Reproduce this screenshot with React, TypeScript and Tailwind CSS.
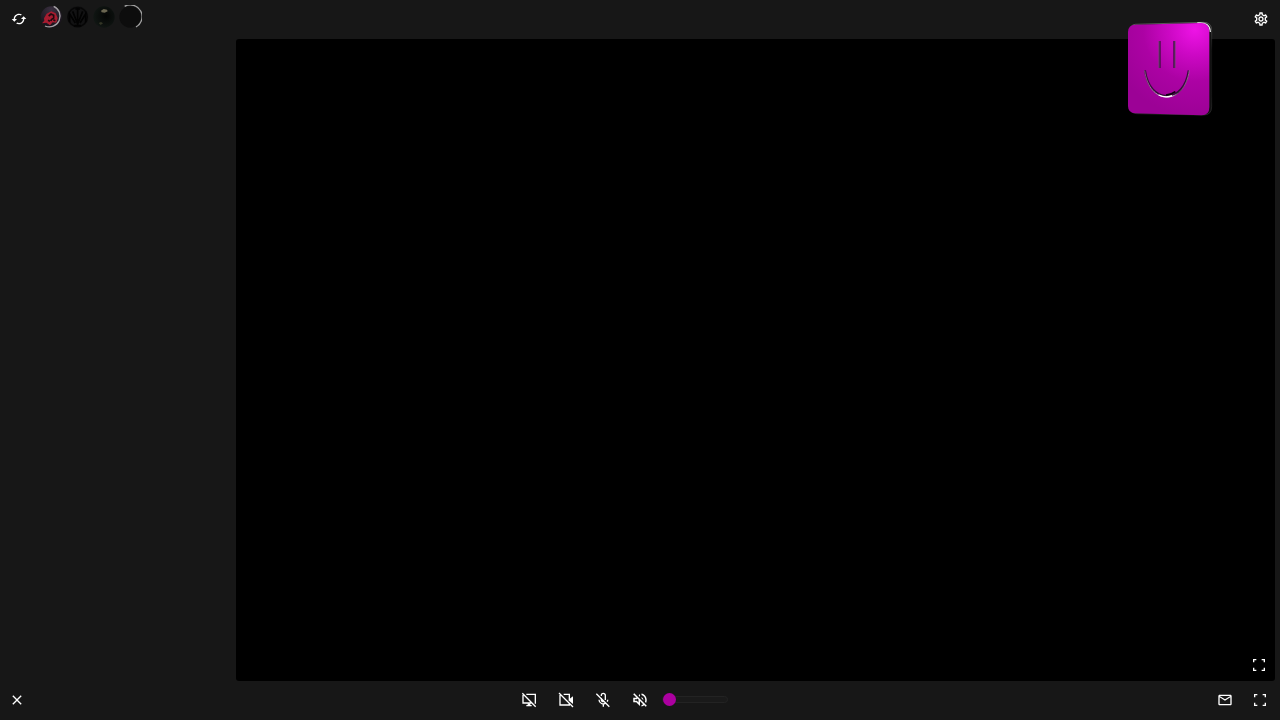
import { useState } from "react";
import type { ReactNode } from "react";
import { MdCached, MdClose, MdMailOutline, MdOutlineSettings, MdOutlineVolumeOff } from "react-icons/md";

function IconButton({ label, children }: { label: string; children: ReactNode }) {
  return (
    <button
      type="button"
      aria-label={label}
      className="flex h-6 w-6 shrink-0 items-center justify-center rounded text-white hover:bg-[#2a2a2a]"
    >
      {children}
    </button>
  );
}

function FullscreenIcon() {
  return (
    <svg viewBox="0 0 24 24" className="h-4 w-4" fill="currentColor">
      <path d="M3 3h5v2H5v3H3zM16 3h5v5h-2V5h-3zM3 16h2v3h3v2H3zM19 16h2v5h-5v-2h3z" />
    </svg>
  );
}

function ScreenOffIcon() {
  return (
    <svg viewBox="0 0 24 24" className="h-4 w-4" fill="none" stroke="currentColor" strokeWidth="2">
      <path d="M8 3.5h13.5v13h-1M3 4.5v12h12.5M2 2l20 20" />
      <path d="M8 19.5h8v2H8zM10 17h4v3h-4z" fill="currentColor" stroke="none" />
    </svg>
  );
}

function VideoOffIcon() {
  return (
    <svg viewBox="0 0 24 24" className="h-4 w-4" fill="none" stroke="currentColor" strokeWidth="2">
      <path d="M8.5 3.5H17V13M3 4.5v15h14v-2M1.5 1.5l21 21" />
      <path d="M17 10.5l5.5-4v11.5L17 13.5z" fill="currentColor" stroke="none" />
    </svg>
  );
}

function MicOffIcon() {
  return (
    <svg viewBox="0 0 24 24" className="h-4 w-4" fill="none" stroke="currentColor" strokeWidth="2">
      <path d="M9.5 6V5a3 3 0 0 1 6 0v7M9.5 9v2.5a3 3 0 0 0 3.5 3M6 11.5a6.5 6.5 0 0 0 10.5 5M19 11.5a6 6 0 0 1-.7 3M12.5 18v4M2 2.5l19.5 19.5" />
    </svg>
  );
}

function Avatar({ label, children }: { label: string; children: ReactNode }) {
  return (
    <button type="button" aria-label={label} className="h-6 w-6">
      <svg viewBox="0 0 72 72" className="h-6 w-6" fill="none">
        {children}
      </svg>
    </button>
  );
}

function Avatars() {
  return (
    <div className="flex gap-0.5">
      <Avatar label="Room 1">
        <defs>
          <radialGradient id="dusk" cx="0.5" cy="0.15" r="0.8">
            <stop offset="0" stopColor="#3a3040" />
            <stop offset="1" stopColor="#17121a" />
          </radialGradient>
        </defs>
        <circle cx="34" cy="36" r="32" fill="url(#dusk)" />
        <path d="M12 40l8-14 14-7 13 6 6 14-4 14-11-1-8 9-11-8-13 2 7-8z" fill="#a81c30" />
        <path d="M26 33l7-6 8 4v8l-7 5-1 4M24 46l6 3M40 44l6 3" stroke="#200a10" strokeWidth="5" />
        <path d="M41 4a32 32 0 1 1-26 59" stroke="#a5a1a5" strokeWidth="4" />
      </Avatar>
      <Avatar label="Room 2">
        <circle cx="35" cy="36" r="32" fill="#121213" />
        <circle cx="35" cy="36" r="29" stroke="#060606" strokeWidth="4" />
        <path
          d="M11 52V27l17 27M35 9v54M28 12h14M20 19l15 38 15-38M42 54l17-27v25M25 62h20"
          stroke="#020202"
          strokeWidth="5"
        />
      </Avatar>
      <Avatar label="Room 3">
        <defs>
          <radialGradient id="moss" cx="0.6" cy="0.45" r="0.6">
            <stop offset="0" stopColor="#040504" />
            <stop offset="1" stopColor="#101613" />
          </radialGradient>
        </defs>
        <circle cx="36" cy="36" r="32" fill="url(#moss)" />
        <path d="M27 17l8-5 10 2 2 5-9 4-9-1z" fill="#6a6550" />
        <path d="M20 54l7-3 6 4-7 5z" fill="#343626" />
      </Avatar>
      <Avatar label="Room 4">
        <circle cx="36" cy="36" r="32" fill="#0d0d0d" />
        <path d="M20 4a34 34 0 0 1 34 62" stroke="#a3a3a3" strokeWidth="4" />
      </Avatar>
    </div>
  );
}

function SmileyBlock() {
  return (
    <svg
      viewBox="48 60 264 291"
      className="pointer-events-none absolute top-[21px] right-[66px] h-[97px] w-[88px]"
      fill="none"
      role="img"
      aria-label="Smiley"
    >
      <defs>
        <radialGradient id="face" gradientUnits="userSpaceOnUse" cx="255" cy="85" r="260">
          <stop offset="0" stopColor="#ee14e6" />
          <stop offset="0.3" stopColor="#cc08c4" />
          <stop offset="0.6" stopColor="#ac02a4" />
          <stop offset="1" stopColor="#9c0296" />
        </radialGradient>
        <linearGradient id="rim" x1="0" y1="0" x2="0" y2="1">
          <stop offset="0" stopColor="#f4f4f4" />
          <stop offset="0.12" stopColor="#777777" />
          <stop offset="0.3" stopColor="#222222" />
          <stop offset="0.8" stopColor="#2d2d2d" />
          <stop offset="1" stopColor="#6a6a6a" />
        </linearGradient>
        <linearGradient id="mouth" x1="0" y1="0" x2="1" y2="0">
          <stop offset="0" stopColor="#8b5d85" />
          <stop offset="0.4" stopColor="#dddddd" />
          <stop offset="0.6" stopColor="#ffffff" />
          <stop offset="0.75" stopColor="#555555" />
          <stop offset="1" stopColor="#a978a1" />
        </linearGradient>
      </defs>
      {/* extruded side and its lit edge */}
      <path
        d="M76 70L280 64q25 0 25 25V317q0 25-24 25L80 338q-20-1-20-20V90q0-19 16-20z"
        fill="#111111"
        stroke="url(#rim)"
        strokeWidth="1"
      />
      <path d="M262 66q38-4 39 27" stroke="#e8e8e8" strokeWidth="4" />
      <path
        d="M76 71L273 66q25 0 25 26V318q0 26-25 25L76 337q-22-1-22-22V93q0-21 22-22z"
        fill="url(#face)"
      />
      <path d="M149 120v81M193 120v81" stroke="#3d1040" strokeWidth="6" />
      <path d="M147 120v81M195 120v81" stroke="#9a7898" strokeWidth="1.5" />
      <path d="M105 208c7 50 34 77 66 77s58-29 65-77" stroke="#3a0a3e" strokeWidth="6" />
      <path d="M104 209c7 51 34 79 67 79s60-30 67-80" stroke="url(#mouth)" strokeWidth="2.5" />
      <path d="M146 282q20 10 40 2" stroke="#ffffff" strokeWidth="4" />
      <path d="M168 282q16-1 28-10" stroke="#0b020c" strokeWidth="5" />
    </svg>
  );
}

export default function App() {
  const [volume, setVolume] = useState(0);

  return (
    <div className="relative flex h-screen flex-col bg-[#171717] font-['Roboto',sans-serif] text-white">
      {/* TOP BAR */}
      <header className="flex h-[39px] shrink-0 items-start justify-between pt-[5px] pr-[7px] pl-[7px]">
        <div className="flex items-start gap-[9px]">
          <div className="pt-0.5">
            <IconButton label="Refresh">
              <MdCached size={16} />
            </IconButton>
          </div>
          <Avatars />
        </div>
        <div className="pt-0.5">
          <IconButton label="Settings">
            <MdOutlineSettings size={16} />
          </IconButton>
        </div>
      </header>

      {/* STAGE */}
      <div className="flex min-h-0 flex-1 pr-[5px]">
        <aside className="w-59 shrink-0" />
        <main className="flex flex-1 items-end justify-end rounded-[3px] bg-black p-1">
          <IconButton label="Expand video">
            <FullscreenIcon />
          </IconButton>
        </main>
      </div>

      {/* CONTROLS */}
      <footer className="flex h-[39px] shrink-0 items-center justify-between pr-2 pb-0.5 pl-[5px]">
        <div className="pr-0.5">
          <IconButton label="Close">
            <MdClose size={16} />
          </IconButton>
        </div>

        <div className="flex items-center gap-[13px]">
          <IconButton label="Share screen">
            <ScreenOffIcon />
          </IconButton>
          <IconButton label="Camera">
            <VideoOffIcon />
          </IconButton>
          <IconButton label="Microphone">
            <MicOffIcon />
          </IconButton>
          <div className="flex items-center gap-[10px]">
            <IconButton label="Mute">
              <MdOutlineVolumeOff size={18} />
            </IconButton>
            <input
              type="range"
              aria-label="Volume"
              min={0}
              max={100}
              value={volume}
              onChange={(e) => setVolume(Number(e.target.value))}
              className="h-[7px] w-[66px] appearance-none rounded-full border border-[#232323] bg-[#1a1a1a] [&::-webkit-slider-thumb]:h-[13px] [&::-webkit-slider-thumb]:w-[13px] [&::-webkit-slider-thumb]:appearance-none [&::-webkit-slider-thumb]:rounded-full [&::-webkit-slider-thumb]:bg-[#ac00a0]"
            />
          </div>
        </div>

        <div className="flex items-center gap-[11px]">
          <IconButton label="Messages">
            <MdMailOutline size={16} />
          </IconButton>
          <IconButton label="Fullscreen">
            <FullscreenIcon />
          </IconButton>
        </div>
      </footer>

      <SmileyBlock />
    </div>
  );
}
